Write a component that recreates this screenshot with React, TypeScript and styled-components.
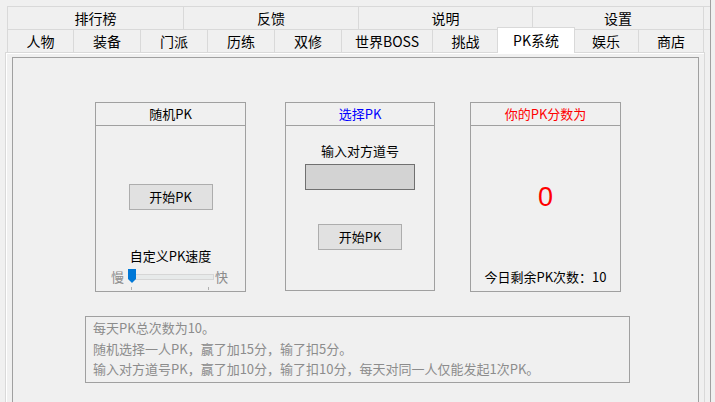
import React from 'react'
import styled, { createGlobalStyle } from 'styled-components'

const GlobalStyle = createGlobalStyle`
  html, body {
    margin: 0;
    padding: 0;
    background: #f0f0f0;
  }
  body {
    font-family: "Noto Sans CJK SC", "Noto Sans", sans-serif;
    font-size: 13px;
    color: #000;
  }
`

const Screen = styled.div`
  display: flex;
  width: 715px;
  height: 402px;
  overflow: hidden;
`

const Main = styled.div`
  width: 710px;
  display: flex;
  flex-direction: column;
`

const Edge = styled.div`
  width: 1px;
  background: #a0a0a0;
`

const TabStrip = styled.div`
  margin: 6px 0 0 7px;
  display: flex;
  flex-direction: column;
`

const TabRow = styled.div`
  display: flex;
  height: 23px;
  box-sizing: border-box;
  border-top: 1px solid #d9d9d9;
  border-left: 1px solid #d9d9d9;
`

const Tab = styled.div<{ $w: number; $active?: boolean }>`
  box-sizing: border-box;
  width: ${p => p.$w}px;
  display: flex;
  align-items: center;
  justify-content: center;
  font-size: 14px;
  line-height: 20px;
  border-right: 1px solid #d9d9d9;
  background: ${p => (p.$active ? '#ffffff' : '#f0f0f0')};
  ${p =>
    p.$active &&
    `
    position: relative;
    z-index: 1;
    margin: -3px -1px -1px -2px;
    width: ${p.$w + 3}px;
    height: 26px;
    border: 1px solid #d9d9d9;
    border-bottom: none;
    padding-bottom: 2px;
  `}
`

const TabPage = styled.div`
  margin-left: 5px;
  width: 700px;
  flex: 1;
  box-sizing: border-box;
  border: 1px solid #d9d9d9;
  border-bottom: none;
  padding: 4px 5px 0 6px;
  box-shadow: inset 1px 1px 0 #ffffff;
`

const Panel = styled.div`
  height: 400px;
  box-sizing: border-box;
  border: 1px solid #a0a0a0;
  padding-top: 44px;
`

const BoxRow = styled.div`
  display: flex;
  align-items: flex-start;
`

const Box = styled.div<{ $left: number; $w: number; $h: number }>`
  box-sizing: border-box;
  width: ${p => p.$w}px;
  height: ${p => p.$h}px;
  margin-left: ${p => p.$left}px;
  border: 1px solid #a0a0a0;
  display: flex;
  flex-direction: column;
`

const BoxTitle = styled.div<{ $color?: string }>`
  height: 23px;
  flex: none;
  box-sizing: border-box;
  border-bottom: 1px solid #a0a0a0;
  display: flex;
  align-items: center;
  justify-content: center;
  font-size: 13px;
  line-height: 18px;
  color: ${p => p.$color || '#000'};
`

const BoxBody = styled.div<{ $top: number }>`
  flex: 1;
  display: flex;
  flex-direction: column;
  align-items: center;
  padding-top: ${p => p.$top}px;
`

const Button = styled.button<{ $mt?: number }>`
  width: 84px;
  height: 26px;
  margin-top: ${p => p.$mt || 0}px;
  box-sizing: border-box;
  background: #e1e1e1;
  border: 1px solid #adadad;
  font-family: inherit;
  font-size: 13px;
  line-height: 18px;
  color: #000;
  padding: 0;
`

const Label = styled.div<{ $mt?: number }>`
  font-size: 13px;
  line-height: 18px;
  margin-top: ${p => p.$mt || 0}px;
`

const SliderRow = styled.div`
  align-self: stretch;
  display: flex;
  align-items: flex-start;
  margin: 3px 0 0 15px;
  height: 22px;
`

const SliderEnd = styled.span`
  font-size: 13px;
  line-height: 18px;
  color: #8c8c8c;
`

const Track = styled.div`
  position: relative;
  width: 84px;
  height: 22px;
  margin: 0 1px 0 6px;
`

const TrackBar = styled.div`
  position: absolute;
  left: 0;
  right: 0;
  top: 6px;
  height: 4px;
  background: #e7eaea;
  border: 1px solid #d6d6d6;
`

const Tick = styled.div<{ $x: number }>`
  position: absolute;
  top: 19px;
  left: ${p => p.$x}px;
  width: 1px;
  height: 3px;
  background: #b0b0b0;
`

const Thumb = styled.svg`
  position: absolute;
  left: -2px;
  top: 1px;
`

const Field = styled.div`
  width: 110px;
  height: 26px;
  margin-top: 4px;
  box-sizing: border-box;
  background: #d3d3d3;
  border: 1px solid #707070;
`

const Score = styled.div`
  font-family: "Liberation Sans", "Noto Sans", sans-serif;
  font-size: 27px;
  line-height: 28px;
  color: #ff0000;
`

const ScoreBody = styled.div`
  flex: 1;
  display: flex;
  flex-direction: column;
  align-items: center;
  justify-content: space-between;
  padding: 57px 0 5px;
`

const Notes = styled.div`
  margin: 24px 0 0 72px;
  width: 545px;
  height: 67px;
  box-sizing: border-box;
  border: 1px solid #a0a0a0;
  padding: 1px 7px;
  color: #8c8c8c;
  font-size: 13px;
  line-height: 20.5px;
`

const topTabs = [
  { name: '排行榜', w: 176 },
  { name: '反馈', w: 175 },
  { name: '说明', w: 174 },
  { name: '设置', w: 171 },
]

const bottomTabs = [
  { name: '人物', w: 66 },
  { name: '装备', w: 67 },
  { name: '门派', w: 67 },
  { name: '历练', w: 67 },
  { name: '双修', w: 67 },
  { name: '世界BOSS', w: 91 },
  { name: '挑战', w: 66 },
  { name: 'PK系统', w: 75, active: true },
  { name: '娱乐', w: 65 },
  { name: '商店', w: 65 },
]

export default function App() {
  return (
    <Screen>
      <GlobalStyle />
      <Main>
        <TabStrip>
          <TabRow>
            {topTabs.map(t => (
              <Tab key={t.name} $w={t.w}>
                {t.name}
              </Tab>
            ))}
          </TabRow>
          <TabRow>
            {bottomTabs.map(t => (
              <Tab key={t.name} $w={t.w} $active={t.active}>
                {t.name}
              </Tab>
            ))}
          </TabRow>
        </TabStrip>
        <TabPage>
          <Panel>
            <BoxRow>
              <Box $left={82} $w={151} $h={190}>
                <BoxTitle>随机PK</BoxTitle>
                <BoxBody $top={58}>
                  <Button>开始PK</Button>
                  <Label $mt={37}>自定义PK速度</Label>
                  <SliderRow>
                    <SliderEnd>慢</SliderEnd>
                    <Track>
                      <TrackBar />
                      <Tick $x={1} />
                      <Tick $x={78} />
                      <Thumb width="8" height="14" viewBox="0 0 8 14">
                        <path d="M0 0 H8 V10 L4 14 L0 10 Z" fill="#0078d7" />
                      </Thumb>
                    </Track>
                    <SliderEnd>快</SliderEnd>
                  </SliderRow>
                </BoxBody>
              </Box>
              <Box $left={39} $w={150} $h={189}>
                <BoxTitle $color="#0000ff">选择PK</BoxTitle>
                <BoxBody $top={16}>
                  <Label>输入对方道号</Label>
                  <Field />
                  <Button $mt={34}>开始PK</Button>
                </BoxBody>
              </Box>
              <Box $left={35} $w={151} $h={190}>
                <BoxTitle $color="#ff0000">你的PK分数为</BoxTitle>
                <ScoreBody>
                  <Score>0</Score>
                  <Label>今日剩余PK次数：10</Label>
                </ScoreBody>
              </Box>
            </BoxRow>
            <Notes>
              <div>每天PK总次数为10。</div>
              <div>随机选择一人PK，赢了加15分，输了扣5分。</div>
              <div>输入对方道号PK，赢了加10分，输了扣10分，每天对同一人仅能发起1次PK。</div>
            </Notes>
          </Panel>
        </TabPage>
      </Main>
      <Edge />
    </Screen>
  )
}
